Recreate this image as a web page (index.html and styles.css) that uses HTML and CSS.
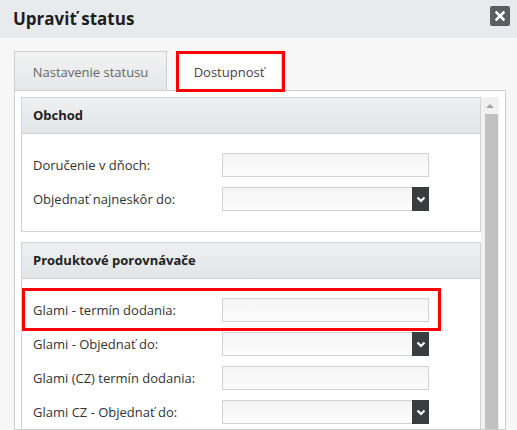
FILE: index.html
```html
<!DOCTYPE html>
<html lang="sk">
<head>
<meta charset="utf-8">
<title>Upraviť status</title>
<link rel="stylesheet" href="styles.css">
</head>
<body>
<div class="dialog">
  <div class="dlg-head">
    <h1 class="dlg-title">Upraviť status</h1>
    <button class="close" type="button" aria-label="Zavrieť">
      <svg width="10" height="10" viewBox="0 0 10 10"><path d="M1.5 1.5 L8.5 8.5 M8.5 1.5 L1.5 8.5" stroke="#fff" stroke-width="2.6" stroke-linecap="square" fill="none"/></svg>
    </button>
  </div>
  <div class="dlg-body">
    <div class="tabs">
      <div class="tab">Nastavenie statusu</div>
      <div class="tab active">Dostupnosť<span class="mark mark-tab"></span></div>
    </div>
    <div class="panel">
      <div class="scroll">
        <div class="sections">
          <section class="box">
            <div class="box-head">Obchod</div>
            <div class="box-body">
              <div class="row"><label class="lbl">Doručenie v dňoch:</label><span class="input"></span></div>
              <div class="row"><label class="lbl">Objednať najneskôr do:</label><span class="select"><span class="sel-btn"><svg width="10" height="7" viewBox="0 0 10 7"><path d="M1.5 1.5 L5 5 L8.5 1.5" stroke="#fff" stroke-width="2.2" fill="none"/></svg></span></span></div>
            </div>
          </section>
          <section class="box">
            <div class="box-head">Produktové porovnávače</div>
            <div class="box-body">
              <div class="row marked"><label class="lbl">Glami - termín dodania:</label><span class="input"></span><span class="mark mark-row"></span></div>
              <div class="row"><label class="lbl">Glami - Objednať do:</label><span class="select"><span class="sel-btn"><svg width="10" height="7" viewBox="0 0 10 7"><path d="M1.5 1.5 L5 5 L8.5 1.5" stroke="#fff" stroke-width="2.2" fill="none"/></svg></span></span></div>
              <div class="row"><label class="lbl">Glami (CZ) termín dodania:</label><span class="input"></span></div>
              <div class="row"><label class="lbl">Glami CZ - Objednať do:</label><span class="select"><span class="sel-btn"><svg width="10" height="7" viewBox="0 0 10 7"><path d="M1.5 1.5 L5 5 L8.5 1.5" stroke="#fff" stroke-width="2.2" fill="none"/></svg></span></span></div>
            </div>
          </section>
        </div>
        <div class="scrollbar">
          <div class="sb-arrow"></div>
          <div class="sb-thumb"></div>
        </div>
      </div>
    </div>
  </div>
</div>
</body>
</html>
```

FILE: styles.css
```css
html, body {
  margin: 0;
  padding: 0;
  height: 430px;
  overflow: hidden;
}
body {
  font-family: "Open Sans", "Liberation Sans", sans-serif;
  font-size: 13px;
  color: #333;
  background: #f7f7f7;
}
.dialog {
  display: flex;
  flex-direction: column;
  height: 430px;
}
.dlg-head {
  height: 38px;
  background: #e8ebee;
  display: flex;
  align-items: center;
  justify-content: space-between;
  padding: 0 7px 0 13px;
  flex: none;
}
.dlg-title {
  margin: 0;
  font-size: 17px;
  font-weight: 700;
  color: #1e1e1e;
  line-height: 1;
  position: relative;
  top: -1px;
}
.close {
  width: 20px;
  height: 20px;
  border: 0;
  border-radius: 2px;
  background: #5a5e62;
  padding: 0;
  display: flex;
  align-items: center;
  justify-content: center;
  position: relative;
  top: -3px;
}
.close svg { display: block; }
.dlg-body {
  padding: 13px 11px 0 14px;
  flex: 1;
  display: flex;
  flex-direction: column;
  min-height: 0;
}
.tabs {
  display: flex;
  align-items: flex-end;
  gap: 9px;
  flex: none;
}
.tab {
  border: 1px solid #cfcfcf;
  border-bottom: 0;
  display: flex;
  align-items: center;
  justify-content: center;
  padding-top: 2px;
  box-sizing: border-box;
  height: 39px;
  color: #666;
  background: linear-gradient(#f3f3f3, #e4e6e8);
  position: relative;
}
.tab:first-child { width: 153px; }
.tab.active {
  width: 106px;
  background: #fff;
  color: #444;
  height: 40px;
  margin-bottom: -1px;
  padding-bottom: 1px;
  z-index: 1;
}
.mark {
  position: absolute;
  border: 3px solid #ff0000;
  box-sizing: border-box;
  pointer-events: none;
}
.mark-tab {
  left: -1px;
  top: -1px;
  right: -4px;
  bottom: -1px;
}
.panel {
  border: 1px solid #cfcfcf;
  background: #fff;
  padding: 6px 6px 0 6px;
  flex: 1;
  min-height: 0;
  overflow: hidden;
}
.scroll {
  display: flex;
  height: 100%;
}
.sections {
  flex: 1;
  display: flex;
  flex-direction: column;
  gap: 10px;
}
.box {
  border: 1px solid #d3d3d3;
  background: #fff;
}
.box-head {
  height: 35px;
  line-height: 35px;
  padding-left: 11px;
  font-weight: 700;
  color: #222;
  background: linear-gradient(#eff0f1, #e1e5e8);
  border-bottom: 1px solid #d3d3d3;
}
.box-body {
  padding: 14px 11px 15px;
}
.row {
  height: 34px;
  display: flex;
  align-items: center;
  position: relative;
}
.lbl {
  width: 189px;
  flex: none;
  color: #333;
}
.input, .select {
  width: 207px;
  height: 24px;
  box-sizing: border-box;
  border: 1px solid #d3d3d3;
  background: linear-gradient(#f4f4f4, #fcfcfc);
  display: flex;
  justify-content: flex-end;
}
.sel-btn {
  width: 17px;
  height: 24px;
  margin: -1px -1px -1px 0;
  background: #393d40;
  display: flex;
  align-items: center;
  justify-content: center;
}
.sel-btn svg { display: block; }
.mark-row {
  left: -11px;
  top: -5px;
  width: 419px;
  height: 43px;
}
.scrollbar {
  width: 18px;
  flex: none;
  background: #f1f1f1;
  display: flex;
  flex-direction: column;
  align-items: center;
}
.sb-arrow {
  width: 0;
  height: 0;
  border-left: 4px solid transparent;
  border-right: 4px solid transparent;
  border-bottom: 4px solid #a3a3a3;
  margin-top: 7px;
}
.sb-thumb {
  margin-top: 6px;
  width: 13px;
  flex: 1;
  background: #c1c1c1;
  position: relative;
  left: 1px;
}
```
